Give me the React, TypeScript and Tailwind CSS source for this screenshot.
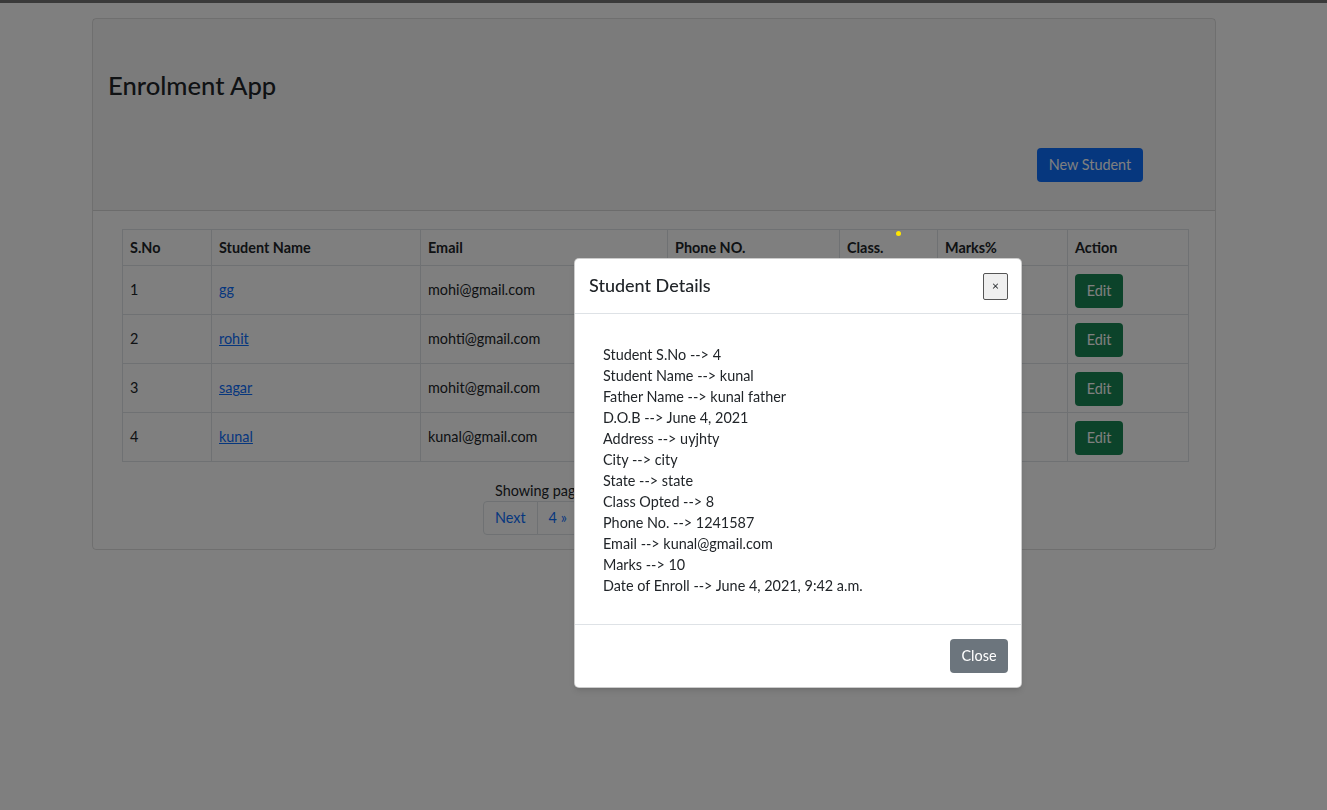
import React from 'react';

const students = [
    { sno: 1, name: 'gg', email: 'mohi@gmail.com' },
    { sno: 2, name: 'rohit', email: 'mohti@gmail.com' },
    { sno: 3, name: 'sagar', email: 'mohit@gmail.com' },
    { sno: 4, name: 'kunal', email: 'kunal@gmail.com' },
];

const details = [
    'Student S.No --> 4',
    'Student Name --> kunal',
    'Father Name --> kunal father',
    'D.O.B --> June 4, 2021',
    'Address --> uyjhty',
    'City --> city',
    'State --> state',
    'Class Opted --> 8',
    'Phone No. --> 1241587',
    'Email --> kunal@gmail.com',
    'Marks --> 10',
    'Date of Enroll --> June 4, 2021, 9:42 a.m.',
];

const cols = [89, 209, 247, 172, 98, 130, 121];
const heads = ['S.No', 'Student Name', 'Email', 'Phone NO.', 'Class.', 'Marks%', 'Action'];

export default function App() {
    return (
        <div className="relative min-h-screen bg-white font-['Segoe_UI',Lato,sans-serif] text-[14.4px] leading-[1.5] text-[#212529]">
            <div className="h-[3px] bg-[#747474]" />

            {/* Card */}
            <div className="ml-[92px] mt-[15px] w-[1124px] rounded-[4px] border border-black/[.125]">
                <div className="h-[192px] border-b border-black/[.125] bg-black/[.03]">
                    <h3 className="pl-[15px] pt-[51px] text-[25.6px] font-medium leading-[1.2]">Enrolment App</h3>
                    <div className="mt-[47px] flex justify-end pr-[72px]">
                        <button className="h-[34px] w-[106px] rounded-[4px] bg-[#0d6efd] text-white">New Student</button>
                    </div>
                </div>

                <div className="px-[29px] pb-[14px] pt-[18px]">
                    <table className="w-[1066px] table-fixed border-collapse">
                        <colgroup>
                            {cols.map((w, i) => (
                                <col key={i} style={{ width: w }} />
                            ))}
                        </colgroup>
                        <thead>
                            <tr>
                                {heads.map((h) => (
                                    <th key={h} className="border border-[#dee2e6] px-[7px] py-[7px] text-left font-bold leading-[21px]">
                                        {h}
                                    </th>
                                ))}
                            </tr>
                        </thead>
                        <tbody>
                            {students.map((s) => (
                                <tr key={s.sno} className="h-[49px]">
                                    <td className="border border-[#dee2e6] px-[7px]">{s.sno}</td>
                                    <td className="border border-[#dee2e6] px-[7px]">
                                        <a className="text-[#0d6efd] underline">{s.name}</a>
                                    </td>
                                    <td className="border border-[#dee2e6] px-[7px]">{s.email}</td>
                                    <td className="border border-[#dee2e6] px-[7px]" />
                                    <td className="border border-[#dee2e6] px-[7px]" />
                                    <td className="border border-[#dee2e6] px-[7px]" />
                                    <td className="border border-[#dee2e6] px-[7px] pt-[1px]">
                                        <button className="h-[34px] w-[48px] rounded-[4px] bg-[#198754] text-white">Edit</button>
                                    </td>
                                </tr>
                            ))}
                        </tbody>
                    </table>

                    <div className="mt-[18px] w-[452px] overflow-hidden whitespace-nowrap pl-[373px] leading-[21px]">Showing page 1 of 2.</div>
                    <div className="flex pl-[361px]">
                        <a className="flex h-[34px] items-center rounded-l-[4px] border border-[#dee2e6] px-[11px] text-[#0d6efd]">Next</a>
                        <a className="-ml-px flex h-[34px] items-center rounded-r-[4px] border border-[#dee2e6] px-[11px] text-[#0d6efd]">4 »</a>
                    </div>
                </div>
            </div>

            {/* Backdrop */}
            <div className="fixed inset-0 bg-black/50" />

            {/* Modal */}
            <div className="absolute left-[574px] top-[258px] w-[448px] rounded-[5px] border border-black/20 bg-white shadow-md">
                <div className="flex h-[55px] items-center justify-between border-b border-[#dee2e6] pl-[14px] pr-[13px]">
                    <h5 className="-mt-[1px] text-[18px] font-medium leading-[1.5]">Student Details</h5>
                    <button className="flex h-[27px] w-[25px] items-center justify-center rounded-[2px] border border-[#555] bg-[#efefef] text-[12px] leading-none">
                        ×
                    </button>
                </div>
                <div className="pb-[28px] pl-[28px] pt-[30px]">
                    {details.map((d) => (
                        <div key={d} className="leading-[21px]">
                            {d}
                        </div>
                    ))}
                </div>
                <div className="flex justify-end border-t border-[#dee2e6] px-[13px] py-[14px]">
                    <button className="h-[34px] w-[58px] rounded-[4px] bg-[#6c757d] text-white">Close</button>
                </div>
            </div>

            <div className="absolute left-[896px] top-[231px] h-[5px] w-[5px] rounded-full bg-[#ffe600]" />
        </div>
    );
}
